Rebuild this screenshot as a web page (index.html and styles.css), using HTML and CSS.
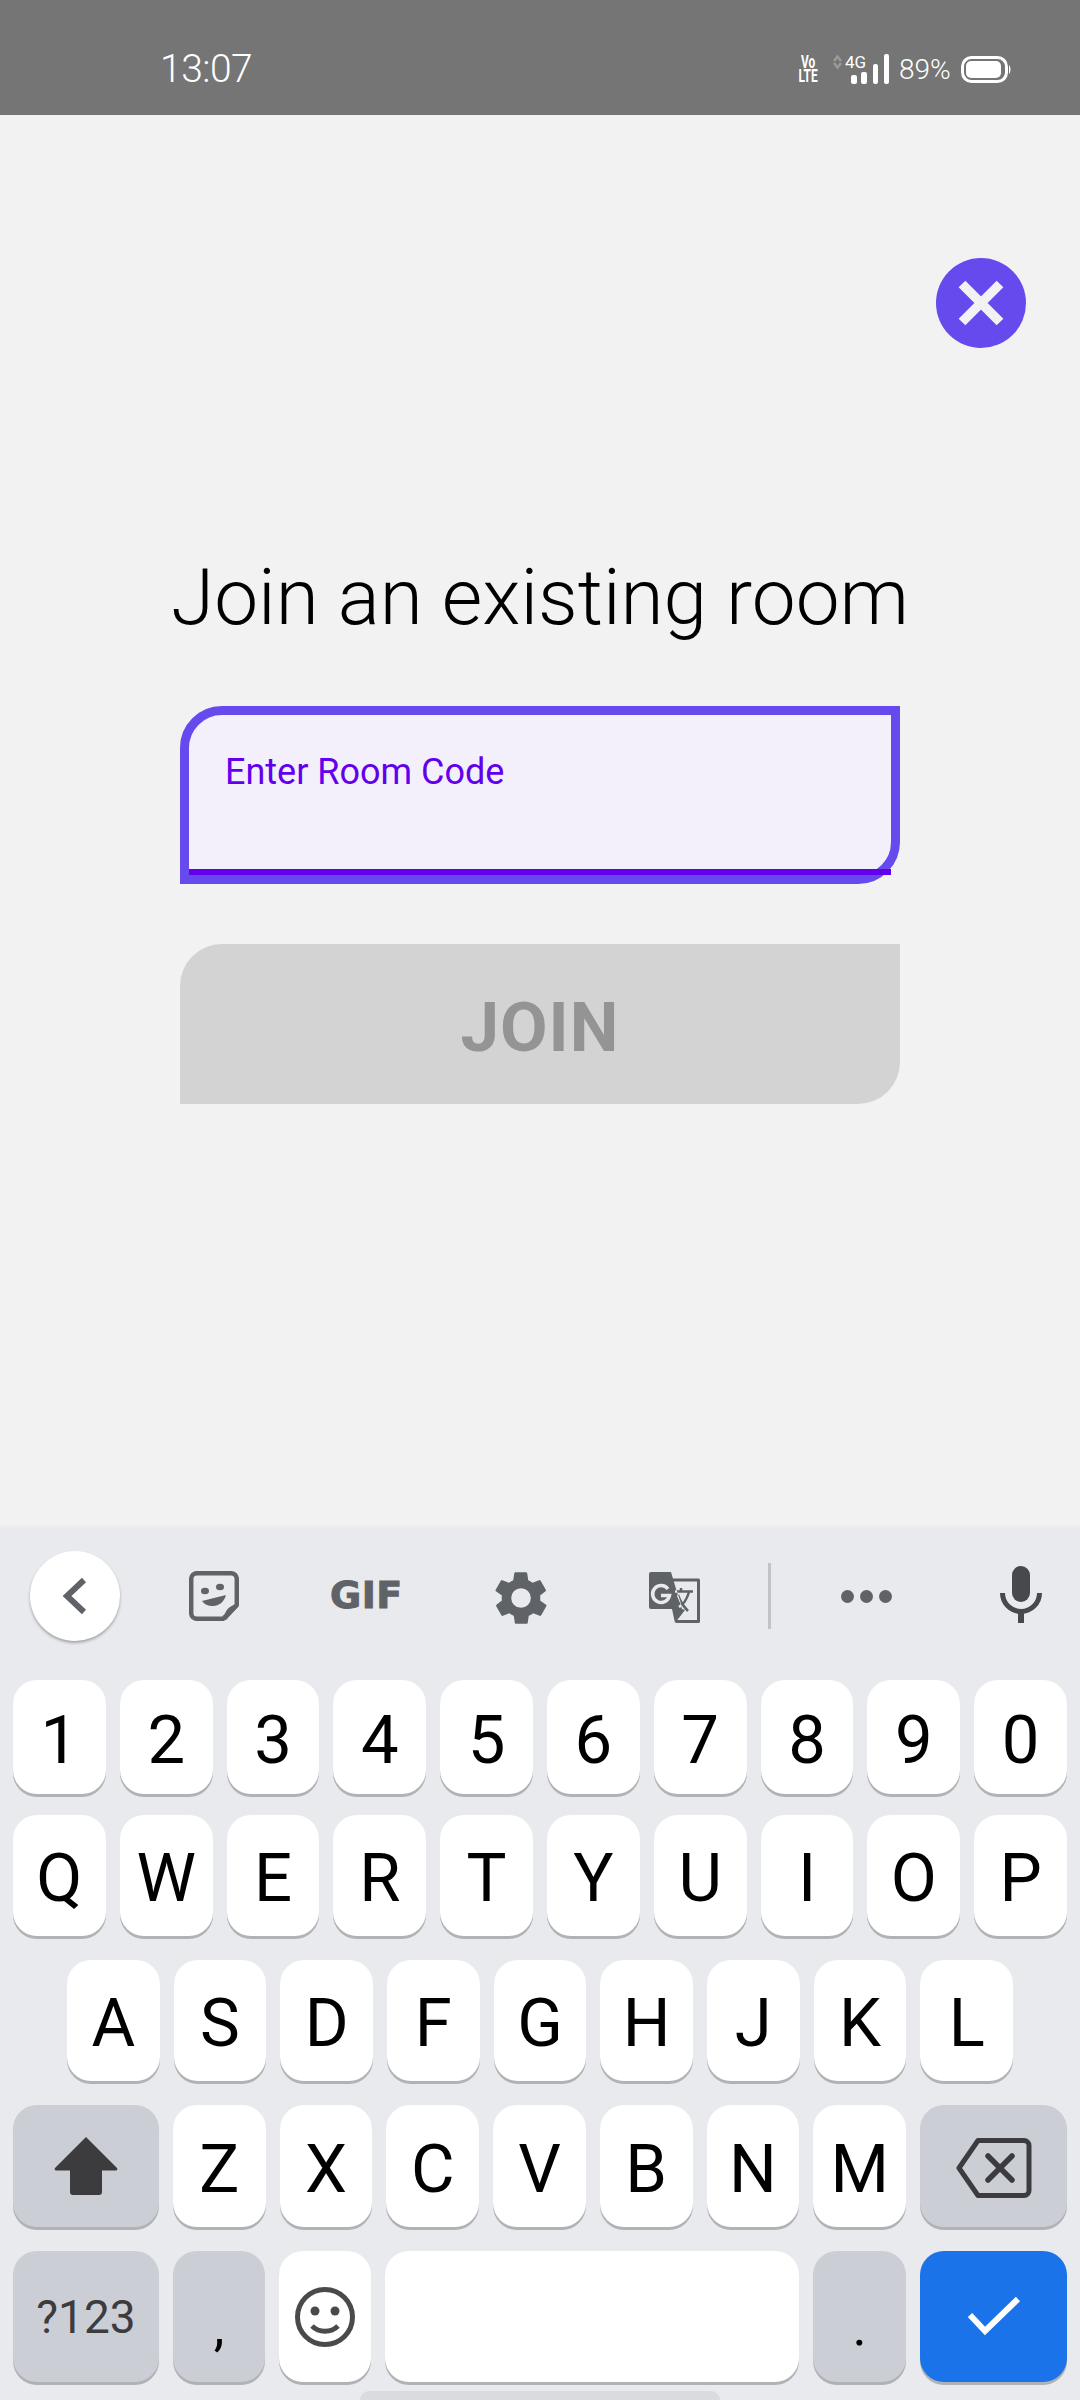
FILE: index.html
```html
<!Doctype html>
<html lang="en">
<head>
	<meta charset="utf-8">
	<title>Join an existing room</title>
	<link rel="stylesheet" href="styles.css">
</head>
<body>
	<div class="status">
		<span class="time">13:07</span>
		<div class="status_icons">
			<span class="volte">Vo<br>LTE</span>
			<svg class="arrows" width="9" height="28" viewBox="0 0 9 28"><path d="M1 6 4.500 1.500 8 6M1 8 4.500 12.500 8 8" fill="none" stroke="#9a9a9a" stroke-width="2.500"/></svg>
			<div class="signal">
				<span class="fourg">4G</span>
				<svg width="44" height="30" viewBox="0 0 44 30"><g fill="#fff"><rect x="6" y="21" width="6" height="9" rx="2"/><rect x="16" y="18" width="6" height="12" rx="2"/><rect x="28" y="10" width="5" height="20" rx="2"/><rect x="39" y="0" width="5" height="30" rx="2"/></g></svg>
			</div>
			<span class="battery_pct">89%</span>
			<svg class="battery" width="50" height="27" viewBox="0 0 50 27"><rect x="1.500" y="1.500" width="44" height="24" rx="9" fill="none" stroke="#fff" stroke-width="3"/><rect x="5" y="5" width="35" height="17" rx="5" fill="#fff"/><path d="M48 9c2 2 2 7 0 9z" fill="#fff"/></svg>
		</div>
	</div>

	<div class="main">
		<div class="close_row">
			<div class="close">
				<svg width="90" height="90" viewBox="0 0 90 90"><path d="M26 26 64 64M64 26 26 64" stroke="#f2f2f2" stroke-width="9.500" fill="none"/></svg>
			</div>
		</div>
		<h1>Join an existing room</h1>
		<div class="field">
			<label>Enter Room Code</label>
			<div class="underline"></div>
		</div>
		<div class="join">JOIN</div>
	</div>

	<div class="keyboard">
		<div class="toolbar">
			<div class="back">
				<svg width="30" height="40" viewBox="0 0 30 40"><path d="M24 4 7 20l17 16" fill="none" stroke="#5f6368" stroke-width="6"/></svg>
			</div>
			<svg class="tool sticker" width="50" height="50" viewBox="0 0 50 50"><path d="M8 2.200h34a5.800 5.800 0 0 1 5.800 5.800v26L34 47.800H8A5.800 5.800 0 0 1 2.200 42V8A5.800 5.800 0 0 1 8 2.200z" fill="none" stroke="#5f6368" stroke-width="4.500"/><ellipse cx="16" cy="20" rx="4" ry="3.200" fill="#5f6368"/><ellipse cx="31" cy="16" rx="4" ry="3.200" fill="#5f6368"/><path d="M13 30 37 24c-2 7-7 11-13 11-5 0-9-2-11-5z" fill="#5f6368"/><path d="M35 49c0-9 5-15 14-16v3L37 49z" fill="#5f6368"/></svg>
			<span class="gif">GIF</span>
			<svg class="tool gear" width="62" height="62" viewBox="0 0 24 24"><path fill="#5f6368" d="M19.400 13a7.500 7.500 0 0 0 0-2l2.100-1.600a.5.500 0 0 0 .1-.6l-2-3.500a.5.500 0 0 0-.6-.2l-2.500 1a7.300 7.300 0 0 0-1.700-1l-.4-2.700a.5.500 0 0 0-.5-.4h-4a.5.500 0 0 0-.5.400l-.4 2.700a7.300 7.300 0 0 0-1.700 1l-2.500-1a.5.500 0 0 0-.6.200l-2 3.500a.5.500 0 0 0 .1.600L4.600 11a7.500 7.500 0 0 0 0 2l-2.100 1.600a.5.500 0 0 0-.1.600l2 3.500c.1.200.4.300.6.200l2.500-1a7.300 7.300 0 0 0 1.700 1l.4 2.700c0 .2.200.4.500.4h4c.3 0 .5-.2.500-.4l.4-2.700a7.300 7.300 0 0 0 1.700-1l2.500 1c.2.100.5 0 .6-.2l2-3.500a.5.500 0 0 0-.1-.6zM12 15.800a3.800 3.800 0 1 1 0-7.600 3.800 3.800 0 0 1 0 7.600z"/></svg>
			<svg class="tool translate" width="51" height="51" viewBox="0 0 51 51">
				<clipPath id="page"><path d="M0 0H22L34 38H0z"/></clipPath>
				<path d="M23 8H49.500V49.500H27" fill="none" stroke="#5f6368" stroke-width="3" stroke-linejoin="round"/>
				<path d="M2 0H22L33 37 36 38 26 51 23 37H2a2 2 0 0 1-2-2V2a2 2 0 0 1 2-2z" fill="#5f6368"/>
				<path d="M19 17a8.500 8.500 0 1 0 1.500 6.500H12" fill="none" stroke="#e8eaed" stroke-width="3.500"/>
				<path d="M26 19.500H44M32 16v4M40 20c-2 7-5 12-10 15M29 23c2 6 5 11 10 16" fill="none" stroke="#5f6368" stroke-width="2.500"/>
				<path clip-path="url(#page)" d="M26 19.500H44M32 16v4M40 20c-2 7-5 12-10 15M29 23c2 6 5 11 10 16" fill="none" stroke="#e8eaed" stroke-width="2.500"/>
			</svg>
			<div class="divider"></div>
			<div class="dots"><i></i><i></i><i></i></div>
			<svg class="tool mic" width="42" height="57" viewBox="0 0 42 57"><rect x="12" y="0" width="18" height="36" rx="9" fill="#48494c"/><path d="M2.500 27a18.500 18.500 0 0 0 37 0" fill="none" stroke="#48494c" stroke-width="5"/><rect x="18" y="44" width="6" height="13" fill="#48494c"/></svg>
		</div>

		<div class="row row1">
			<div class="key">1</div><div class="key">2</div><div class="key">3</div><div class="key">4</div><div class="key">5</div>
			<div class="key">6</div><div class="key">7</div><div class="key">8</div><div class="key">9</div><div class="key">0</div>
		</div>
		<div class="row row2">
			<div class="key">Q</div><div class="key">W</div><div class="key">E</div><div class="key">R</div><div class="key">T</div>
			<div class="key">Y</div><div class="key">U</div><div class="key">I</div><div class="key">O</div><div class="key">P</div>
		</div>
		<div class="row row3">
			<div class="key">A</div><div class="key">S</div><div class="key">D</div><div class="key">F</div><div class="key">G</div>
			<div class="key">H</div><div class="key">J</div><div class="key">K</div><div class="key">L</div>
		</div>
		<div class="row row4">
			<div class="key shift dark">
				<svg width="64" height="60" viewBox="0 0 64 60"><path d="M32 1 63 32a1.500 1.500 0 0 1-1 2.500H48V56a3 3 0 0 1-3 3H19a3 3 0 0 1-3-3V34.500H2A1.500 1.500 0 0 1 1 32z" fill="#3c3c3f"/></svg>
			</div>
			<div class="key">Z</div><div class="key">X</div><div class="key">C</div><div class="key">V</div><div class="key">B</div><div class="key">N</div><div class="key">M</div>
			<div class="key del dark">
				<svg width="76" height="60" viewBox="0 0 76 60"><path d="M22 2.500h46a5 5 0 0 1 5 5v45a5 5 0 0 1-5 5H22L3 30z" fill="none" stroke="#3c3c3f" stroke-width="5" stroke-linejoin="round"/><path d="M32 18 56 42M56 18 32 42" stroke="#3c3c3f" stroke-width="5.500" stroke-linecap="round"/></svg>
			</div>
		</div>
		<div class="row row5">
			<div class="key shift dark symbols">?123</div>
			<div class="key small dark punct">,</div>
			<div class="key small emoji">
				<svg width="60" height="60" viewBox="0 0 60 60"><circle cx="30" cy="30" r="27.500" fill="none" stroke="#4a4a4d" stroke-width="5"/><circle cx="20" cy="24" r="4.500" fill="#4a4a4d"/><circle cx="40" cy="24" r="4.500" fill="#4a4a4d"/><path d="M17 39c7 7 19 7 26 0" fill="none" stroke="#4a4a4d" stroke-width="5"/></svg>
			</div>
			<div class="key space"></div>
			<div class="key period dark punct">.</div>
			<div class="key del enter">
				<svg width="54" height="42" viewBox="0 0 54 42"><path d="M3 19 18 35 51 3" fill="none" stroke="#fff" stroke-width="6"/></svg>
			</div>
		</div>
		<div class="handle"></div>
	</div>
</body>
</html>
```

FILE: styles.css
```css
html, body {
	margin: 0;
	padding: 0;
}

body {
	width: 1080px;
	height: 2400px;
	overflow: hidden;
	display: flex;
	flex-direction: column;
	font-family: "Roboto", "Liberation Sans", sans-serif;
	background: #f2f2f2;
}

.status {
	height: 115px;
	flex: none;
	background: #757575;
	color: #fff;
	display: flex;
	align-items: center;
	justify-content: space-between;
	padding: 23px 69px 0 160px;
	box-sizing: border-box;
}

.time {
	font-size: 39px;
	font-weight: 300;
	letter-spacing: -0.5px;
}

.status_icons {
	display: flex;
	align-items: center;
}

.volte {
	width: 32px;
	margin: 0 -5.500px;
	font-size: 18px;
	line-height: 14px;
	font-weight: 700;
	text-align: center;
	transform: scaleX(0.66);
}

.arrows {
	margin-left: 15px;
}

.signal {
	position: relative;
	width: 44px;
	height: 30px;
	margin-left: 3px;
}

.signal svg {
	display: block;
}

.fourg {
	position: absolute;
	left: 0;
	top: 0;
	font-size: 17px;
	line-height: 16px;
}

.battery_pct {
	width: 52px;
	margin-left: 10px;
	font-size: 28px;
	font-weight: 300;
}

.battery {
	margin-left: 10px;
}

.main {
	flex: 1;
	display: flex;
	flex-direction: column;
	align-items: center;
}

.close_row {
	width: 100%;
	display: flex;
	justify-content: flex-end;
	padding: 143px 54px 0 0;
	box-sizing: border-box;
}

.close {
	width: 90px;
	height: 90px;
	border-radius: 50%;
	background: #674aee;
}

.close svg {
	display: block;
}

h1 {
	margin: 205px 0 0;
	font-size: 78.300px;
	line-height: 89px;
	font-weight: 300;
	color: #000;
}

.field {
	position: relative;
	width: 720px;
	height: 178px;
	margin-top: 64px;
	box-sizing: border-box;
	border: 9px solid #674aee;
	border-radius: 42px 0 42px 0;
	background: #f3f0fb;
	padding: 36px 36px 0;
}

.field label {
	display: block;
	font-size: 36px;
	line-height: 42px;
	color: #6200ee;
}

.underline {
	position: absolute;
	left: 0;
	right: 0;
	bottom: 0;
	height: 6px;
	background: #6200ee;
}

.join {
	width: 720px;
	height: 160px;
	margin-top: 60px;
	padding-top: 6px;
	box-sizing: border-box;
	background: #d3d3d3;
	border-radius: 42px 0 42px 0;
	color: #949494;
	font-size: 69px;
	font-weight: 700;
	letter-spacing: 1px;
	display: flex;
	align-items: center;
	justify-content: center;
}

.keyboard {
	flex: none;
	height: 872px;
	background: #e8eaed;
	box-shadow: 0 -2px 4px rgba(0, 0, 0, 0.04);
	position: relative;
}

.toolbar {
	height: 152px;
	position: relative;
}

.back {
	position: absolute;
	left: 30px;
	top: 23px;
	width: 90px;
	height: 90px;
	border-radius: 50%;
	background: #fff;
	box-shadow: 0 2px 3px rgba(0, 0, 0, 0.3);
	display: flex;
	align-items: center;
	justify-content: center;
}

.tool {
	position: absolute;
}

.sticker { left: 189px; top: 43px; }
.gear { left: 490px; top: 39px; }
.translate { left: 649px; top: 44px; }
.mic { left: 1000px; top: 38px; }

.gif {
	position: absolute;
	left: 330px;
	top: 41px;
	font-family: "DejaVu Sans", sans-serif;
	font-size: 38px;
	line-height: 52px;
	font-weight: 700;
	letter-spacing: 0.5px;
	-webkit-text-stroke: 1px #5f6368;
	color: #5f6368;
}

.divider {
	position: absolute;
	left: 768px;
	top: 35px;
	width: 3px;
	height: 66px;
	background: #c0c3c7;
}

.dots {
	position: absolute;
	left: 841px;
	top: 62px;
	display: flex;
	gap: 6px;
}

.dots i {
	display: block;
	width: 13px;
	height: 13px;
	border-radius: 50%;
	background: #5f6368;
}

.row {
	display: flex;
	justify-content: center;
	gap: 14px;
	padding: 0 13px;
}

.key {
	flex: 1;
	height: 121px;
	padding-top: 5px;
	box-sizing: border-box;
	background: #fff;
	border-radius: 24px;
	box-shadow: 0 3px 0 #b0b2b5;
	color: #000;
	font-size: 67px;
	display: flex;
	align-items: center;
	justify-content: center;
}

.row1 { height: 135px; }
.row2 { height: 145px; }
.row3 { height: 145px; padding: 0 67px; }
.row4 { height: 146px; }
.row1 .key { height: 114px; }
.row4 .key { height: 122px; }
.row5 .key { height: 131px; }

.shift {
	flex: none;
	width: 146px;
	padding-top: 0;
}

.del {
	flex: none;
	width: 147px;
	padding-top: 4px;
}

.small {
	flex: none;
	width: 92px;
}

.period {
	flex: none;
	width: 93px;
}

.dark {
	background: #cbced5;
}

.symbols {
	font-size: 46px;
	color: #3c3c3f;
}

.punct {
	align-items: flex-end;
	padding-top: 0;
	padding-bottom: 24px;
	font-size: 54px;
}

.emoji {
	padding-top: 0;
}

.space {
	padding-top: 0;
}

.enter {
	background: #1a73e8;
	padding-top: 0;
}

.handle {
	position: absolute;
	left: 360px;
	bottom: 0;
	width: 360px;
	height: 9px;
	border-radius: 9px 9px 0 0;
	background: #d9dbde;
}
```
